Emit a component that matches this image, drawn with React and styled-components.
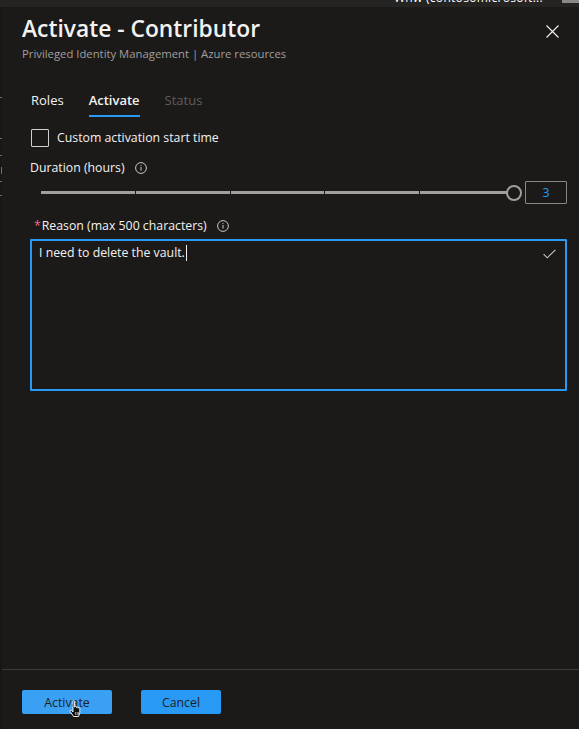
import React from 'react';
import styled, { createGlobalStyle } from 'styled-components';

const Global = createGlobalStyle`
  html, body { margin: 0; padding: 0; background: #1b1a19; }
  body { font-family: "Open Sans", "Noto Sans", sans-serif; overflow: hidden; }
  * { box-sizing: border-box; }
`;

const Page = styled.div`
  width: 579px;
  height: 729px;
  display: flex;
  flex-direction: column;
  background: #1b1a19;
  color: #f3f2f1;
  position: relative;
  overflow: hidden;
`;

const TopStrip = styled.div`
  height: 7px;
  flex-shrink: 0;
  background: #252423;
  display: flex;
  justify-content: flex-end;
  align-items: flex-start;
  overflow: hidden;
`;

const TopText = styled.span`
  font-size: 12px;
  line-height: 14px;
  color: #ffffff;
  margin-top: -9px;
  margin-right: 19px;
  white-space: nowrap;
  letter-spacing: 0.3px;
`;

const TopChip = styled.span`
  width: 17px;
  height: 3px;
  background: #8a8886;
`;

const Body = styled.div`
  flex: 1;
  display: flex;
  min-height: 0;
`;

const Edge = styled.div`
  width: 2px;
  flex-shrink: 0;
  background:
    linear-gradient(#6e6c6a, #6e6c6a) 0 90px / 2px 1px no-repeat,
    linear-gradient(#6e6c6a, #6e6c6a) 0 131px / 2px 1px no-repeat,
    linear-gradient(#6e6c6a, #6e6c6a) 0 148px / 2px 1px no-repeat,
    linear-gradient(#6e6c6a, #6e6c6a) 1px 160px / 1px 7px no-repeat,
    linear-gradient(#6e6c6a, #6e6c6a) 0 174px / 2px 1px no-repeat,
    linear-gradient(#6e6c6a, #6e6c6a) 0 188px / 2px 1px no-repeat,
    #181716;
`;

const Panel = styled.div`
  flex: 1;
  display: flex;
  flex-direction: column;
  min-width: 0;
`;

const Header = styled.header`
  display: flex;
  justify-content: space-between;
  align-items: flex-start;
  padding: 8px 20px 0 20px;
`;

const TitleBlock = styled.div`
  display: flex;
  flex-direction: column;
`;

const Title = styled.h1`
  margin: 0;
  font-size: 22.8px;
  line-height: 28px;
  font-weight: 600;
  color: #f3f2f1;
`;

const Subtitle = styled.div`
  margin-top: 3px;
  font-size: 11.3px;
  line-height: 16px;
  color: #a19f9d;
`;

const CloseButton = styled.button`
  margin-top: 10px;
  width: 13px;
  height: 13px;
  padding: 0;
  border: 0;
  background: transparent;
  display: flex;
  color: #f3f2f1;
`;

const Content = styled.main`
  flex: 1;
  display: flex;
  flex-direction: column;
  padding: 0 12px 0 28px;
`;

const Tabs = styled.nav`
  display: flex;
  gap: 25px;
  margin-top: 30px;
  padding-left: 1px;
`;

const Tab = styled.div`
  font-size: 13px;
  line-height: 16px;
  padding-bottom: 7px;
  border-bottom: 2px solid ${p => (p.$active ? '#2899f5' : 'transparent')};
  font-weight: ${p => (p.$active ? 600 : 400)};
  color: ${p => (p.$disabled ? '#5f5d5b' : '#f3f2f1')};
`;

const CheckRow = styled.label`
  display: flex;
  align-items: center;
  gap: 8px;
  margin-top: 12px;
  padding-left: 1px;
  height: 18px;
`;

const CheckBox = styled.span`
  width: 18px;
  height: 18px;
  border: 1px solid #d2d0ce;
  border-radius: 1px;
`;

const Label = styled.div`
  display: flex;
  align-items: center;
  font-size: 12.3px;
  line-height: 18px;
  color: #f3f2f1;
  margin-top: ${p => p.$mt || 0}px;
  padding-left: ${p => p.$pl || 0}px;
`;

const Required = styled.span`
  color: #f1707b;
  margin-right: 1px;
`;

const InfoIcon = styled.svg`
  width: 12px;
  height: 12px;
  margin-left: 10px;
  color: #c8c6c4;
`;

const SliderRow = styled.div`
  display: flex;
  align-items: center;
  margin-top: 4px;
  height: 23px;
  padding-left: 11px;
`;

const Track = styled.div`
  flex: 1;
  height: 3px;
  display: flex;
  gap: 1px;
  position: relative;
`;

const Segment = styled.span`
  flex: 1;
  background: #a19f9d;
`;

const Thumb = styled.span`
  position: absolute;
  right: -8px;
  top: 50%;
  width: 16px;
  height: 16px;
  margin-top: -8px;
  border-radius: 50%;
  border: 2px solid #a19f9d;
  background: #1b1a19;
`;

const ValueBox = styled.div`
  width: 42px;
  height: 23px;
  margin-left: 11px;
  border: 1px solid #8a8886;
  border-radius: 1px;
  display: flex;
  align-items: center;
  justify-content: center;
  font-size: 12.3px;
  color: #2899f5;
`;

const TextArea = styled.div`
  margin-top: 4px;
  height: 152px;
  border: 2px solid #2899f5;
  border-radius: 1px;
  padding: 3px 7px;
  display: flex;
  justify-content: space-between;
  align-items: flex-start;
`;

const AreaText = styled.div`
  font-size: 12.3px;
  line-height: 18px;
  color: #f3f2f1;
  display: flex;
  align-items: center;
`;

const Caret = styled.span`
  width: 1px;
  height: 16px;
  background: #f3f2f1;
  margin-left: 1px;
`;

const CheckMark = styled.svg`
  width: 13px;
  height: 10px;
  margin-top: 5px;
  margin-right: 2px;
  color: #c8c6c4;
`;

const Footer = styled.footer`
  border-top: 1px solid #3b3a39;
  padding: 20px 0 15px 20px;
  display: flex;
  gap: 29px;
  position: relative;
`;

const Button = styled.button`
  height: 24px;
  min-width: ${p => p.$w}px;
  border: 0;
  border-radius: 2px;
  background: ${p => (p.$hover ? '#3aa0f3' : '#2899f5')};
  color: #201f1e;
  font-family: "Open Sans", "Noto Sans", sans-serif;
  font-size: 12.3px;
  padding: 0 16px;
`;

const Cursor = styled.svg`
  position: absolute;
  left: 67px;
  top: 30px;
  width: 15px;
  height: 18px;
`;

function Info() {
  return (
    <InfoIcon viewBox="0 0 12 12" fill="none">
      <circle cx="6" cy="6" r="5.4" stroke="currentColor" strokeWidth="1" />
      <rect x="5.5" y="5" width="1" height="3.6" fill="currentColor" />
      <rect x="5.5" y="3.1" width="1" height="1" fill="currentColor" />
    </InfoIcon>
  );
}

export default function App() {
  return (
    <Page>
      <Global />
      <TopStrip>
        <TopText>Wnw (contosomicrosoft...</TopText>
        <TopChip />
      </TopStrip>
      <Body>
        <Edge />
        <Panel>
          <Header>
            <TitleBlock>
              <Title>Activate - Contributor</Title>
              <Subtitle>Privileged Identity Management | Azure resources</Subtitle>
            </TitleBlock>
            <CloseButton aria-label="Close">
              <svg width="13" height="13" viewBox="0 0 13 13">
                <path d="M0.5 0.5 L12.5 12.5 M12.5 0.5 L0.5 12.5" stroke="currentColor" strokeWidth="1.1" />
              </svg>
            </CloseButton>
          </Header>
          <Content>
            <Tabs>
              <Tab>Roles</Tab>
              <Tab $active>Activate</Tab>
              <Tab $disabled>Status</Tab>
            </Tabs>
            <CheckRow>
              <CheckBox />
              <Label>Custom activation start time</Label>
            </CheckRow>
            <Label $mt={12}>Duration (hours)<Info /></Label>
            <SliderRow>
              <Track>
                <Segment /><Segment /><Segment /><Segment /><Segment />
                <Thumb />
              </Track>
              <ValueBox>3</ValueBox>
            </SliderRow>
            <Label $mt={13} $pl={4}><Required>*</Required>Reason (max 500 characters)<Info /></Label>
            <TextArea>
              <AreaText>I need to delete the vault.<Caret /></AreaText>
              <CheckMark viewBox="0 0 13 10" fill="none">
                <path d="M0.6 5.2 L4.2 8.8 L12.4 0.8" stroke="currentColor" strokeWidth="1.1" />
              </CheckMark>
            </TextArea>
          </Content>
          <Footer>
            <Button $w={90} $hover>Activate</Button>
            <Button $w={80}>Cancel</Button>
            <Cursor viewBox="0 0 15 18">
              <path
                d="M4 1.2 C4 0.4 5.6 0.4 5.6 1.2 L5.6 7 L6 7 C6 6.2 7.6 6.2 7.6 7 L7.6 7.6 C7.6 6.8 9.2 6.8 9.2 7.6 L9.2 8.2 C9.2 7.4 10.8 7.4 10.8 8.2 L10.8 12.5 L9.6 16.5 L4.6 16.5 L1.2 11.6 C0.6 10.6 1.8 9.8 2.6 10.6 L4 12 Z"
                fill="#111" stroke="#fff" strokeWidth="0.9" strokeLinejoin="round"
              />
              <path d="M6.6 12 V15 M8.2 12 V15 M9.6 12 V15" stroke="#fff" strokeWidth="0.6" />
            </Cursor>
          </Footer>
        </Panel>
      </Body>
    </Page>
  );
}
